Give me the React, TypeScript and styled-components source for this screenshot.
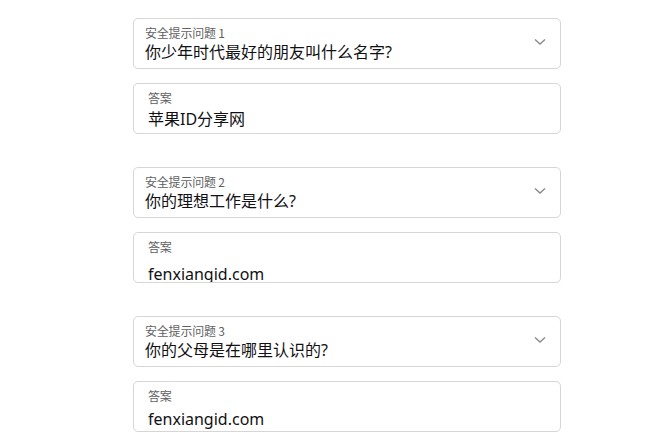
import React from 'react';
import styled, { createGlobalStyle } from 'styled-components';

const GlobalStyle = createGlobalStyle`
  html, body {
    margin: 0;
    padding: 0;
    background: #ffffff;
  }
  body {
    font-family: "Noto Sans", "Noto Sans CJK SC", sans-serif;
    color: #1d1d1f;
  }
`;

const Page = styled.div`
  width: 660px;
  height: 440px;
  overflow: hidden;
  padding: 18px 0 0 133px;
  box-sizing: border-box;
  display: flex;
  flex-direction: column;
  gap: 33px;
`;

const Group = styled.div`
  width: 428px;
  display: flex;
  flex-direction: column;
  gap: 14px;
`;

const Field = styled.div<{ indent: number }>`
  position: relative;
  height: 51px;
  box-sizing: border-box;
  border: 1px solid #d6d6d6;
  border-radius: 5px;
  background: #fff;
  padding: 6px 40px 0 ${(p) => p.indent}px;
  overflow: hidden;
  display: flex;
  flex-direction: column;
`;

const Label = styled.div`
  font-family: "Noto Sans CJK SC", sans-serif;
  font-size: 12px;
  line-height: 16px;
  color: #5f5f63;
  letter-spacing: -0.2px;
`;

const Value = styled.div<{ shift: number }>`
  font-size: 16px;
  line-height: 22px;
  color: #111114;
  margin-top: ${(p) => p.shift}px;
  white-space: nowrap;
`;

const Chevron = styled.svg`
  position: absolute;
  right: 14px;
  top: 19px;
  width: 12px;
  height: 8px;
`;

const ChevronIcon = () => (
  <Chevron viewBox="0 0 12 8">
    <path d="M1 1.5 L6 6 L11 1.5" fill="none" stroke="#8a8a8e" strokeWidth="1.4" />
  </Chevron>
);

const QUESTIONS = [
  { label: '安全提示问题 1', question: '你少年时代最好的朋友叫什么名字?', answer: '苹果ID分享网', shift: 2 },
  { label: '安全提示问题 2', question: '你的理想工作是什么?', answer: 'fenxiangid.com', shift: 8 },
  { label: '安全提示问题 3', question: '你的父母是在哪里认识的?', answer: 'fenxiangid.com', shift: 4 },
];

export default function App() {
  return (
    <>
      <GlobalStyle />
      <Page>
        {QUESTIONS.map((q) => (
          <Group key={q.label}>
            <Field indent={11}>
              <Label>{q.label}</Label>
              <Value shift={0}>{q.question}</Value>
              <ChevronIcon />
            </Field>
            <Field indent={14}>
              <Label>答案</Label>
              <Value shift={q.shift}>{q.answer}</Value>
            </Field>
          </Group>
        ))}
      </Page>
    </>
  );
}
